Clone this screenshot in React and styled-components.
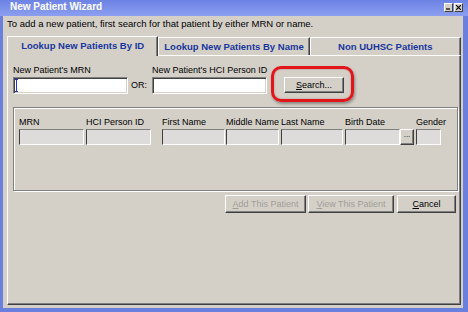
import styled, { createGlobalStyle } from "styled-components";

const GlobalStyle = createGlobalStyle`
  html, body { margin: 0; padding: 0; background: #d4d0c8; }
  body { font-family: "Liberation Sans", Arial, sans-serif; font-size: 9px; color: #000; }
`;

const Window = styled.div`
  width: 468px;
  height: 312px;
  display: flex;
  flex-direction: column;
  background: #6b7fdf;
`;

const TitleBar = styled.div`
  height: 16px;
  display: flex;
  align-items: flex-start;
  justify-content: space-between;
  padding: 0 5px 0 10px;
  background: linear-gradient(#6d83e4, #8b9ef0);
`;

const Title = styled.div`
  color: #fff;
  font-weight: bold;
  font-size: 10px;
  line-height: 14px;
`;

const TitleButtons = styled.div`
  display: flex;
  gap: 1px;
  margin-top: 3px;
`;

const TitleButton = styled.div`
  width: 9px;
  height: 9px;
  box-sizing: border-box;
  background: #d4d0c8;
  border: 1px solid;
  border-color: #fff #404040 #404040 #fff;
  display: flex;
  align-items: center;
  justify-content: center;
`;

const Body = styled.div`
  flex: 1;
  display: flex;
  flex-direction: column;
  background: #d4d0c8;
  margin: 0 5px 4px 3px;
  padding: 2px 2px 3px 4px;
`;

const Intro = styled.div`
  font-size: 9.5px;
  line-height: 12px;
  margin-bottom: 6px;
`;

const TabStrip = styled.div`
  display: flex;
  align-items: flex-end;
  height: 19px;
  position: relative;
  z-index: 1;
`;

const Tab = styled.div`
  flex: 1;
  box-sizing: border-box;
  height: ${(p) => (p.$selected ? "20px" : "18px")};
  margin-bottom: ${(p) => (p.$selected ? "-1px" : "0")};
  display: flex;
  align-items: center;
  justify-content: center;
  background: #d4d0c8;
  border-top: 1px solid #fff;
  border-left: 1px solid #fff;
  border-right: 1px solid #404040;
  box-shadow: inset -1px 0 #808080;
  color: #18369e;
  font-weight: bold;
  font-size: 9.5px;
  white-space: nowrap;
  padding-bottom: ${(p) => (p.$selected ? "2px" : "0")};
`;

const Panel = styled.div`
  flex: 1;
  display: flex;
  flex-direction: column;
  border: 1px solid;
  border-color: #fff #404040 #404040 #fff;
  box-shadow: inset -1px -1px #808080;
  padding: 9px 2px 0 5px;
`;

const SearchRow = styled.div`
  display: flex;
  align-items: flex-end;
`;

const FieldGroup = styled.div`
  display: flex;
  flex-direction: column;
  width: ${(p) => p.$width}px;
`;

const Label = styled.div`
  line-height: 11px;
  margin-bottom: 1px;
  white-space: nowrap;
`;

const TextBox = styled.div`
  height: 17px;
  box-sizing: border-box;
  background: #fff;
  border: 1px solid;
  border-color: #808080 #fff #fff #808080;
  box-shadow: inset 1px 1px #404040, inset -1px -1px #d4d0c8;
  display: flex;
  align-items: center;
  padding-left: 1px;
`;

const OrLabel = styled.div`
  width: 24px;
  padding-left: 3px;
  box-sizing: border-box;
  line-height: 17px;
`;

const SearchWrap = styled.div`
  position: relative;
  margin-left: 17px;
  margin-bottom: 1px;
`;

const Highlight = styled.div`
  position: absolute;
  top: -11px;
  left: -13px;
  right: -10px;
  bottom: -9px;
  border: 3px solid #e2161a;
  border-radius: 10px;
  box-shadow: 1px 2px 3px rgba(0, 0, 0, 0.35), inset 0 0 2px rgba(150, 0, 0, 0.4);
  pointer-events: none;
`;

const Button = styled.div`
  width: ${(p) => p.$width}px;
  height: ${(p) => p.$height || 18}px;
  margin-left: ${(p) => p.$offset || 0}px;
  box-sizing: border-box;
  display: flex;
  align-items: center;
  justify-content: center;
  background: #d4d0c8;
  border: 1px solid;
  border-color: #fff #404040 #404040 #fff;
  box-shadow: inset -1px -1px #808080;
  color: ${(p) => (p.$disabled ? "#a19e98" : "#000")};
  white-space: nowrap;
`;

const U = styled.span`
  text-decoration: underline;
`;

const ResultsBox = styled.div`
  margin-top: 13px;
  height: 84px;
  box-sizing: border-box;
  border: 1px solid #808080;
  box-shadow: 1px 1px #fff, inset 1px 1px #fff;
  padding: 9px 0 0 5px;
  display: flex;
  gap: 2px;
`;

const Column = styled.div`
  display: flex;
  flex-direction: column;
  width: ${(p) => p.$width}px;
  margin-left: ${(p) => p.$offset || 0}px;
`;

const ColumnHeader = styled.div`
  line-height: 11px;
  margin-bottom: 1px;
  white-space: nowrap;
`;

const ReadOnlyRow = styled.div`
  display: flex;
`;

const ReadOnlyField = styled.div`
  flex: 1;
  height: 16px;
  box-sizing: border-box;
  background: #dddcdb;
  border: 1px solid;
  border-color: #808080 #fff #fff #404040;
`;

const DotsButton = styled.div`
  width: 14px;
  height: 16px;
  box-sizing: border-box;
  background: #d4d0c8;
  border: 1px solid;
  border-color: #fff #404040 #404040 #fff;
  box-shadow: inset -1px -1px #808080;
  font-size: 8px;
  line-height: 10px;
  text-align: center;
`;

const ActionRow = styled.div`
  display: flex;
  justify-content: flex-end;
  gap: 2px;
  margin-top: 4px;
  margin-right: 2px;
`;

function Caret() {
  return (
    <svg width="3" height="13" viewBox="0 0 3 13">
      <path d="M0 0.5h3M1.5 0v13M0 12.5h3" stroke="#2233cc" strokeWidth="1" fill="none" />
    </svg>
  );
}

const columns = [
  { name: "MRN", width: 65 },
  { name: "HCI Person ID", width: 65 },
  { name: "First Name", width: 63, offset: 9 },
  { name: "Middle Name", width: 53, offset: -1 },
  { name: "Last Name", width: 62 },
  { name: "Birth Date", width: 69, picker: true },
  { name: "Gender", width: 25 },
];

export default function App() {
  return (
    <>
      <GlobalStyle />
      <Window>
        <TitleBar>
          <Title>New Patient Wizard</Title>
          <TitleButtons>
            <TitleButton>
              <svg width="5" height="5" viewBox="0 0 5 5">
                <path d="M0 4h4" stroke="#000" strokeWidth="1.2" />
              </svg>
            </TitleButton>
            <TitleButton>
              <svg width="5" height="5" viewBox="0 0 5 5">
                <path d="M0 0L5 5M5 0L0 5" stroke="#000" strokeWidth="1.1" />
              </svg>
            </TitleButton>
          </TitleButtons>
        </TitleBar>
        <Body>
          <Intro>
            To add a new patient, first search for that patient by either MRN or name.
          </Intro>
          <TabStrip>
            <Tab $selected>Lookup New Patients By ID</Tab>
            <Tab>Lookup New Patients By Name</Tab>
            <Tab>Non UUHSC Patients</Tab>
          </TabStrip>
          <Panel>
            <SearchRow>
              <FieldGroup $width={115}>
                <Label>New Patient's MRN</Label>
                <TextBox>
                  <Caret />
                </TextBox>
              </FieldGroup>
              <OrLabel>OR:</OrLabel>
              <FieldGroup $width={115}>
                <Label>New Patient's HCI Person ID</Label>
                <TextBox />
              </FieldGroup>
              <SearchWrap>
                <Button $width={60} $height={16}>
                  <span>
                    <U>S</U>earch...
                  </span>
                </Button>
                <Highlight />
              </SearchWrap>
            </SearchRow>
            <ResultsBox>
              {columns.map((c) => (
                <Column key={c.name} $width={c.width} $offset={c.offset}>
                  <ColumnHeader>{c.name}</ColumnHeader>
                  <ReadOnlyRow>
                    <ReadOnlyField />
                    {c.picker && <DotsButton>...</DotsButton>}
                  </ReadOnlyRow>
                </Column>
              ))}
            </ResultsBox>
            <ActionRow>
              <Button $width={81} $disabled>
                <span>
                  <U>A</U>dd This Patient
                </span>
              </Button>
              <Button $width={86} $disabled>
                <span>
                  <U>V</U>iew This Patient
                </span>
              </Button>
              <Button $width={59} $offset={1}>
                <span>
                  <U>C</U>ancel
                </span>
              </Button>
            </ActionRow>
          </Panel>
        </Body>
      </Window>
    </>
  );
}
